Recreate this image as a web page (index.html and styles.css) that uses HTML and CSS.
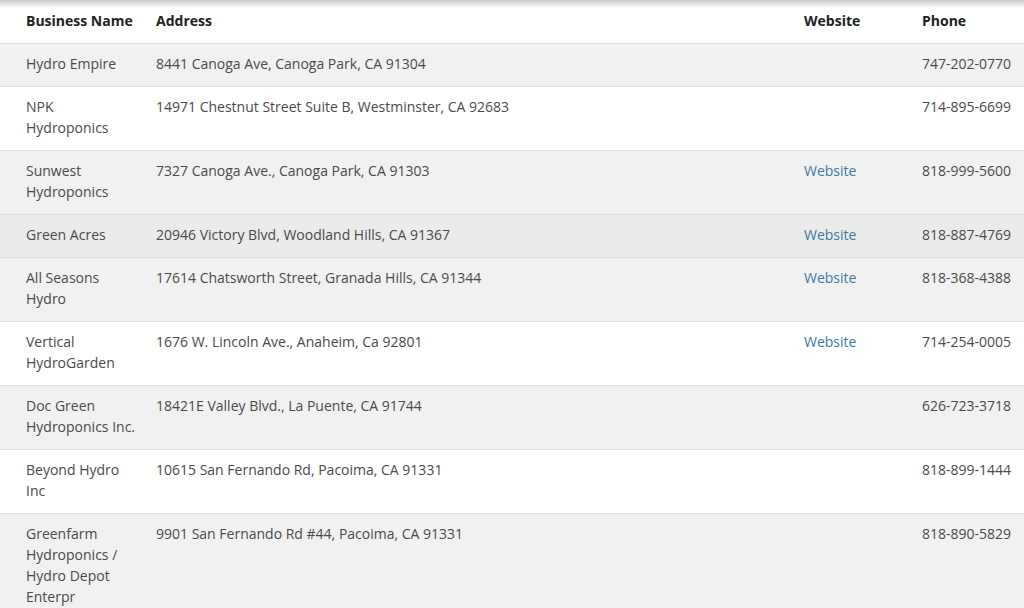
FILE: index.html
```html
<!DOCTYPE html>
<html>
<head>
<meta charset="utf-8">
<link rel="stylesheet" href="styles.css">
</head>
<body>
<div class="shadow"></div>
<table class="biz">
  <colgroup>
    <col class="c-name"><col class="c-addr"><col class="c-web"><col class="c-phone">
  </colgroup>
  <thead>
    <tr><th>Business Name</th><th>Address</th><th>Website</th><th>Phone</th></tr>
  </thead>
  <tbody>
    <tr class="g"><td>Hydro Empire</td><td>8441 Canoga Ave, Canoga Park, CA 91304</td><td></td><td>747-202-0770</td></tr>
    <tr><td>NPK Hydroponics</td><td>14971 Chestnut Street Suite B, Westminster, CA 92683</td><td></td><td>714-895-6699</td></tr>
    <tr class="g"><td>Sunwest Hydroponics</td><td>7327 Canoga Ave., Canoga Park, CA 91303</td><td><a href="#">Website</a></td><td>818-999-5600</td></tr>
    <tr class="h"><td>Green Acres</td><td>20946 Victory Blvd, Woodland Hills, CA 91367</td><td><a href="#">Website</a></td><td>818-887-4769</td></tr>
    <tr class="g"><td>All Seasons Hydro</td><td>17614 Chatsworth Street, Granada Hills, CA 91344</td><td><a href="#">Website</a></td><td>818-368-4388</td></tr>
    <tr><td>Vertical HydroGarden</td><td>1676 W. Lincoln Ave., Anaheim, Ca 92801</td><td><a href="#">Website</a></td><td>714-254-0005</td></tr>
    <tr class="g"><td>Doc Green Hydroponics Inc.</td><td>18421E Valley Blvd., La Puente, CA 91744</td><td></td><td>626-723-3718</td></tr>
    <tr><td>Beyond Hydro Inc</td><td>10615 San Fernando Rd, Pacoima, CA 91331</td><td></td><td>818-899-1444</td></tr>
    <tr class="g"><td>Greenfarm Hydroponics / Hydro Depot Enterpr</td><td>9901 San Fernando Rd #44, Pacoima, CA 91331</td><td></td><td>818-890-5829</td></tr>
  </tbody>
</table>
</body>
</html>
```
FILE: styles.css
```css
html, body {
  margin: 0;
  padding: 0;
  background: #fff;
  overflow: hidden;
}
body {
  font-family: "Open Sans", "Noto Sans", sans-serif;
  font-size: 14px;
  color: #4a4a4a;
  position: relative;
}
.shadow {
  position: absolute;
  left: 0; right: 0; top: 0;
  height: 8px;
  background: linear-gradient(#c8c8c8, rgba(255,255,255,0));
  pointer-events: none;
}
.biz {
  width: 1024px;
  border-collapse: collapse;
  table-layout: fixed;
}
.c-name { width: 146px; }
.c-addr { width: 648px; }
.c-web { width: 118px; }
.c-phone { width: 112px; }
.biz th, .biz td {
  text-align: left;
  vertical-align: top;
  padding: 9px 10px 12px 10px;
  line-height: 21px;
  border-bottom: 1px solid #dedede;
}
.biz th:first-child, .biz td:first-child { padding-left: 26px; }
.biz td:last-child, .biz th:last-child { padding-right: 0; white-space: nowrap; }
.biz th {
  color: #222;
  font-weight: 700;
  padding-top: 10px;
  padding-bottom: 12px;
}
.biz tr.g td { background: #f1f1f1; }
.biz tr.h td { background: #ebebeb; }
.biz a {
  color: #3b7a9c;
  text-decoration: none;
}
```
